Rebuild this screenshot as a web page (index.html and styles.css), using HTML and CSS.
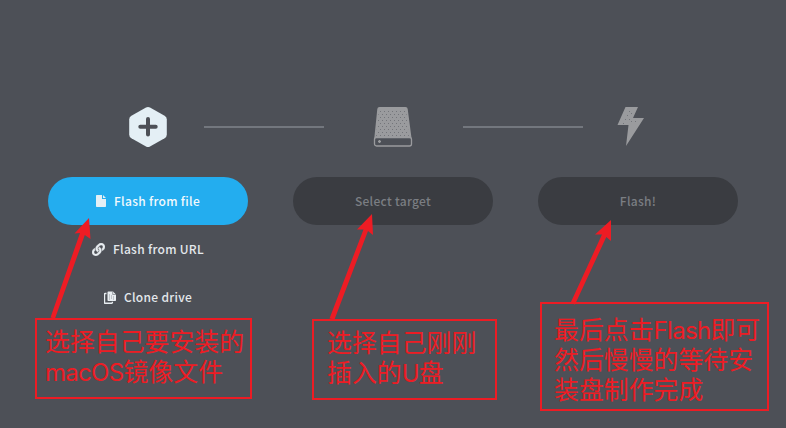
FILE: index.html
```
<!DOCTYPE html>
<html lang="zh-CN">
<head>
<meta charset="utf-8">
<title>Flash</title>
<link rel="stylesheet" href="styles.css">
</head>
<body>
<main class="steps">
  <section class="step">
    <div class="step-icon">
      <svg width="40" height="42" viewBox="0 0 40 42"><path d="M18 1.6q2-1.1 4 0l14.6 8.2q2.2 1.3 2.2 3.8v14.8q0 2.500-2.200 3.800L22 40.400q-2 1.100-4 0L3.400 32.200q-2.200-1.300-2.200-3.800V13.600q0-2.500 2.200-3.800z" fill="#e4eff5"/><path d="M20 13v15.400M12.300 20.700h15.400" stroke="#4d5057" stroke-width="4" stroke-linecap="round"/></svg>
    </div>
    <button class="btn primary">
      <svg class="ic-file" width="10" height="12" viewBox="0 0 10 12"><path d="M0 .7Q0 0 .7 0H6v4h4v7.300q0 .7-.7.7H.7q-.7 0-.7-.7zM7 0l3 3H7z" fill="#e4eff5"/></svg>
      <span>Flash from file</span>
    </button>
    <button class="btn link">
      <svg class="ic-link" width="13" height="13" viewBox="0 0 512 512"><path fill="#e8edf1" stroke="#e8edf1" stroke-width="14" d="M326.612 185.391c59.747 59.809 58.927 155.698.36 214.59-.11.120-.240.250-.360.370l-67.200 67.200c-59.270 59.270-155.699 59.262-214.960 0-59.270-59.260-59.270-155.700 0-214.960l37.106-37.106c9.840-9.840 26.786-3.300 27.294 10.606.648 17.722 3.826 35.527 9.690 52.721 1.986 5.822.567 12.262-3.783 16.612l-13.087 13.087c-28.026 28.026-28.905 73.660-1.155 101.960 28.024 28.579 74.086 28.749 102.325.510l67.200-67.190c28.191-28.191 28.073-73.757 0-101.830-3.701-3.694-7.429-6.564-10.341-8.569a16.037 16.037 0 0 1-6.947-12.606c-.396-10.567 3.348-21.456 11.698-29.806l21.054-21.055c5.521-5.521 14.182-6.199 20.584-1.731a152.482 152.482 0 0 1 20.522 17.197zM467.547 44.449c-59.261-59.262-155.690-59.270-214.960 0l-67.200 67.200c-.12.12-.25.25-.36.37-58.566 58.892-59.387 154.781.36 214.590a152.454 152.454 0 0 0 20.521 17.196c6.402 4.468 15.064 3.789 20.584-1.731l21.054-21.055c8.350-8.350 12.094-19.239 11.698-29.806a16.037 16.037 0 0 0-6.947-12.606c-2.912-2.005-6.640-4.875-10.341-8.569-28.073-28.073-28.191-73.639 0-101.830l67.200-67.190c28.239-28.239 74.300-28.069 102.325.510 27.750 28.300 26.872 73.934-1.155 101.960l-13.087 13.087c-4.350 4.350-5.769 10.790-3.783 16.612 5.864 17.194 9.042 34.999 9.690 52.721.509 13.906 17.454 20.446 27.294 10.606l37.106-37.106c59.271-59.259 59.271-155.699.001-214.959z"/></svg>
      <span>Flash from URL</span>
    </button>
    <button class="btn link">
      <svg class="ic-clone" width="12" height="13" viewBox="0 0 12 13"><path d="M2.500 2.500H1.200q-.7 0-.7.7v8.400q0 .7.7.7h6.500q.7 0 .7-.7v-.8" fill="none" stroke="#e8edf1" stroke-width="1.400"/><path d="M3.500 1.200q0-.7.7-.7H9L12 3.400v5.900q0 .7-.7.7H4.200q-.7 0-.7-.7z" fill="#e8edf1"/><path d="M8.700.5v3H12M5 4h1M7 5h1M5 6h1M9 6h1M7 7h1M5 8h1M9 8h1" fill="none" stroke="#73777c" stroke-width=".7"/></svg>
      <span>Clone drive</span>
    </button>
  </section>
  <div class="rule rule-first"></div>
  <section class="step">
    <div class="step-icon">
      <svg width="40" height="42" viewBox="0 0 40 42">
        <defs><pattern id="dots" width="4" height="6" patternUnits="userSpaceOnUse"><path d="M1 2h1v1H1zM3 5h1v1H3z" fill="#73757a"/></pattern></defs>
        <path d="M4.300 3q.2-2 2.200-2h26q2 0 2.200 2L38.500 32H1.300z" fill="#9a9b9e"/>
        <path d="M6 3h27l3 28H3z" fill="url(#dots)"/>
        <rect x="1.500" y="31.500" width="37" height="8.500" rx="2" fill="#4d5057" stroke="#9a9b9e" stroke-width="1.300"/>
        <path d="M5 35.500h3M6.500 34v3" stroke="#9a9b9e" stroke-width="1.300"/>
      </svg>
    </div>
    <button class="btn disabled"><span>Select target</span></button>
  </section>
  <div class="rule rule-second"></div>
  <section class="step">
    <div class="step-icon bolt">
      <svg width="28" height="42" viewBox="0 0 28 42"><path d="M8.500 1H21l-5 11h11L9 40l2.500-21H.5z" fill="#9a9b9e"/><path d="M12 5h1v1h-1zM10 9h1v1h-1zM14 7h1v1h-1zM8 13h1v1H8zM12 13h1v1h-1zM6 17h1v1H6zM14 15h1v1h-1zM18 15h1v1h-1z" fill="#73757a"/></svg>
    </div>
    <button class="btn disabled"><span>Flash!</span></button>
  </section>
</main>
<svg class="arrows" width="786" height="428" viewBox="0 0 786 428" fill="#ed1c24">
  <path d="M89 218L90.500 239L84.800 235L55 318.500L50.500 317.500L80 233L74.500 233.500Z"/>
  <path d="M372 214L373 235L368 231L334.500 319.500L329.500 318.500L363.500 229.500L357 229.500Z"/>
  <path d="M611 220V241L606.300 237L575 304.500L570.500 303L602 234.500L595 234.500Z"/>
</svg>
<div class="note note-file"><div>选择自己要安装的</div><div><span class="latin">macOS</span>镜像文件</div></div>
<div class="note note-target"><div>选择自己刚刚</div><div>插入的<span class="latin">U</span>盘</div></div>
<div class="note note-flash"><div>最后点击<span class="latin">Flash</span>即可</div><div>然后慢慢的等待安</div><div>装盘制作完成</div></div>
</body>
</html>
```
FILE: styles.css
```
* { box-sizing: border-box; }
body {
  margin: 0;
  height: 428px;
  overflow: hidden;
  position: relative;
  background: #4d5057;
  font-family: "Noto Sans CJK SC", sans-serif;
}
.steps {
  display: grid;
  grid-template-columns: 200px 45px 200px 45px 200px;
  padding: 106px 48px 0;
}
.step { display: flex; flex-direction: column; }
.step-icon { height: 42px; display: flex; justify-content: center; margin-bottom: 29px; }
.step-icon.bolt { padding-right: 14px; }
.rule {
  width: 120px;
  height: 2px;
  margin-top: 20px;
  background: #73777e;
}
.rule-first { margin-left: -44px; }
.rule-second { margin-left: -30px; }
.btn {
  height: 48px;
  width: 200px;
  border: 0;
  padding: 0;
  border-radius: 24px;
  display: flex;
  align-items: center;
  justify-content: center;
  gap: 8px;
  background: none;
  color: #e4e8ec;
  font: 500 12px/18px "Noto Sans CJK SC", sans-serif;
  letter-spacing: .3px;
}
.primary { background: #23adef; color: #f2f9fd; }
.disabled { background: #3a3c41; color: #7b7e83; }
.arrows { position: absolute; left: 0; top: 0; }
.note {
  position: absolute;
  border: 2px solid #ed1c24;
  color: #ed1c24;
  font-size: 24.900px;
  font-weight: 400;
  line-height: 30px;
  white-space: nowrap;
}
.note div { height: 30px; }
.note-file { left: 35px; top: 318px; width: 217px; height: 81px; padding: 5px 8px; }
.note-target { left: 312px; top: 319px; width: 185px; height: 81px; padding: 5px 13px; }
.note-flash { left: 540px; top: 302px; width: 229px; height: 109px; padding: 9px 12px; }
.latin { font-family: Inter, sans-serif; font-size: 24px; line-height: 1; letter-spacing: -.7px; }
```
